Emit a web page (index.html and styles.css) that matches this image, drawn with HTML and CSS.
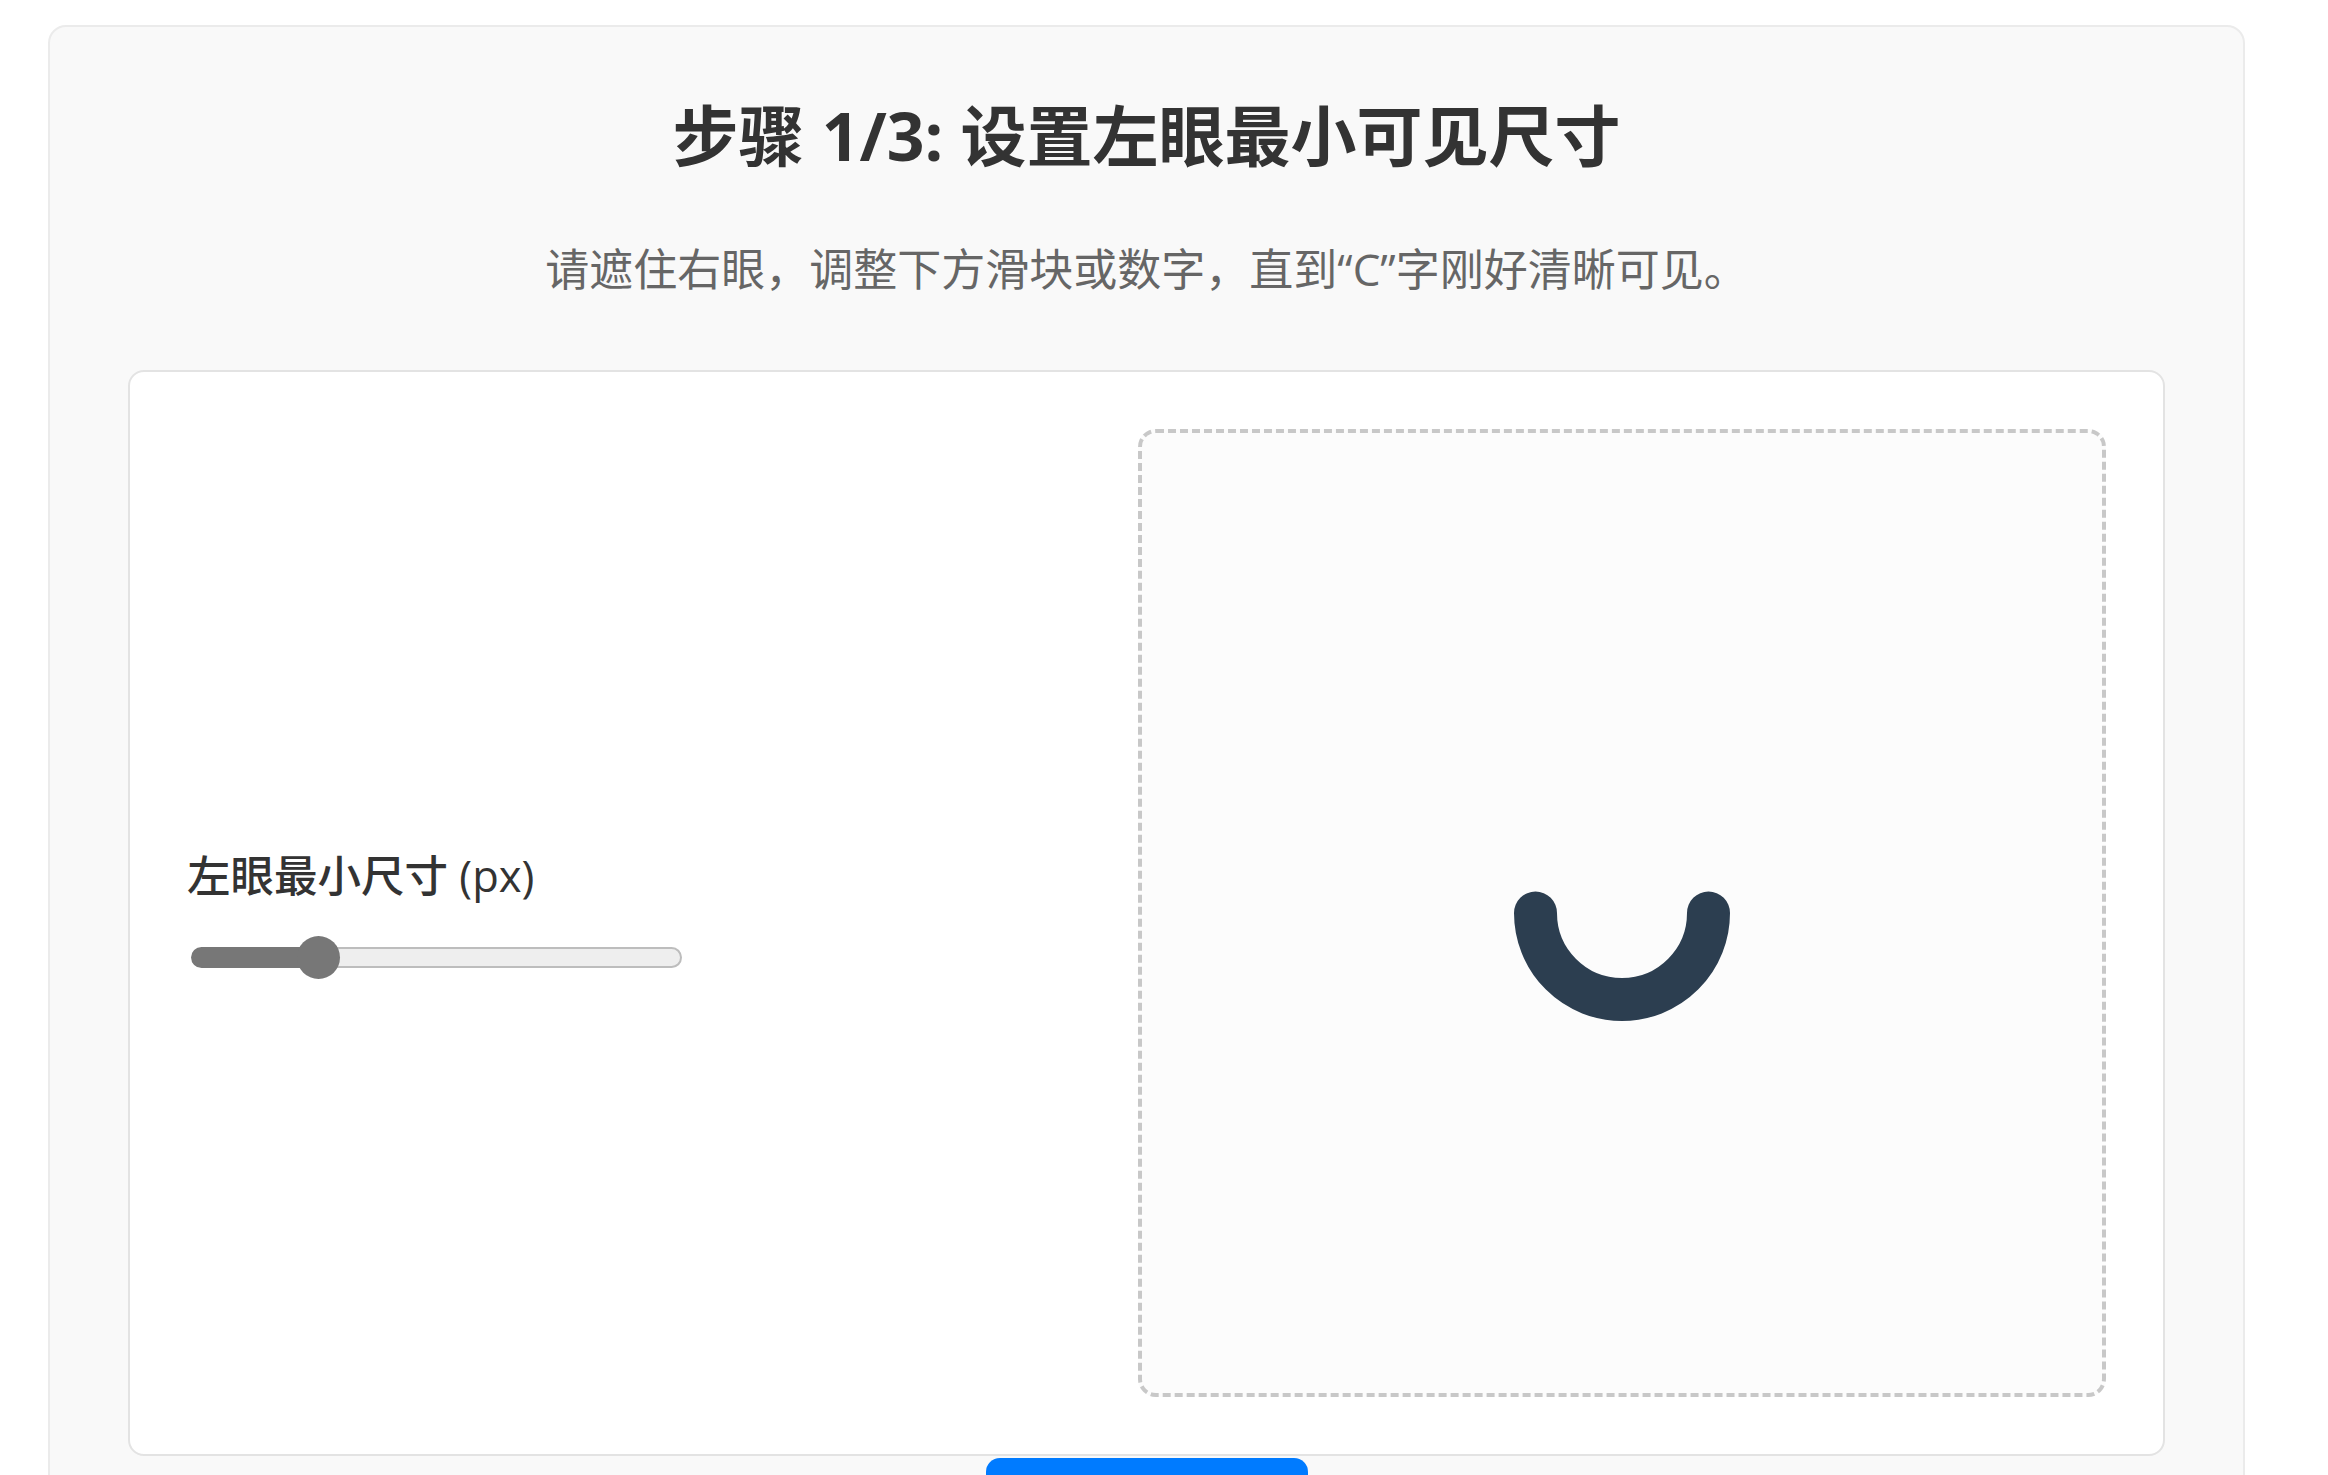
FILE: index.html
```html
<!DOCTYPE html>
<html lang="zh-CN">
<head>
<meta charset="utf-8">
<title>步骤 1/3: 设置左眼最小可见尺寸</title>
<link rel="stylesheet" href="styles.css">
</head>
<body>
<main class="card">
  <h1 class="title">步骤 1/3: 设置左眼最小可见尺寸</h1>
  <p class="subtitle">请遮住右眼，调整下方滑块或数字，直到“C”字刚好清晰可见。</p>
  <section class="panel">
    <div class="control">
      <label class="label">左眼最小尺寸 (px)</label>
      <div class="slider">
        <div class="track"><div class="fill" style="width: 26%"></div></div>
        <div class="thumb" style="left: calc(26% - 21.5px)"></div>
      </div>
    </div>
    <div class="viewer">
      <svg class="optotype" width="216" height="216" viewBox="0 0 216 216" aria-label="C">
        <path d="M 21.5 108 A 86.5 86.5 0 0 0 194.5 108" fill="none" stroke="#2c3e50" stroke-width="43" stroke-linecap="round"/>
      </svg>
    </div>
  </section>
  <div class="actions">
    <button class="btn-next" aria-label="下一步"></button>
  </div>
</main>
</body>
</html>
```
FILE: styles.css
```css
html, body {
  margin: 0;
  padding: 0;
  background: #ffffff;
  overflow: hidden;
}

body {
  font-family: "Open Sans", "Noto Sans CJK SC", sans-serif;
  color: #333333;
}

.card {
  box-sizing: border-box;
  width: 2197px;
  margin: 25px 0 0 48px;
  padding: 68px 78px 80px;
  background: #f9f9f9;
  border: 2px solid #ebebeb;
  border-radius: 18px;
}

.title {
  margin: 0;
  font-size: 66px;
  line-height: 80px;
  font-weight: 700;
  text-align: center;
  color: #333333;
}

.subtitle {
  margin: 64px 0 0;
  font-size: 44px;
  line-height: 60px;
  text-align: center;
  color: #666666;
}

.panel {
  margin-top: 71px;
  display: flex;
  align-items: center;
  justify-content: space-between;
  padding: 57px;
  background: #ffffff;
  border: 2px solid #e3e3e3;
  border-radius: 16px;
}

.control {
  display: flex;
  flex-direction: column;
  gap: 28.5px;
  padding-bottom: 4px;
}

.label {
  font-size: 43.5px;
  line-height: 65px;
  font-weight: 500;
  color: #333333;
}

.slider {
  position: relative;
  width: 491px;
  height: 43px;
  margin-left: 4px;
  display: flex;
  align-items: center;
}

.track {
  position: relative;
  width: 100%;
  height: 21px;
  border-radius: 11px;
  background: #eeeeee;
  box-shadow: inset 0 0 0 2px #bdbdbd;
  overflow: hidden;
}

.fill {
  height: 100%;
  background: #777777;
  border-radius: 11px 0 0 11px;
}

.thumb {
  position: absolute;
  top: 0;
  width: 43px;
  height: 43px;
  border-radius: 50%;
  background: #777777;
}

.viewer {
  box-sizing: border-box;
  width: 968px;
  height: 968px;
  flex: none;
  display: flex;
  align-items: center;
  justify-content: center;
  background: #fcfcfc;
  border: 4px dashed #c8c8c8;
  border-radius: 18px;
}

.optotype {
  display: block;
}

.actions {
  display: flex;
  justify-content: center;
  margin-top: 2px;
}

.btn-next {
  width: 322px;
  height: 90px;
  border: none;
  border-radius: 14px;
  background: #007bff;
}
```
